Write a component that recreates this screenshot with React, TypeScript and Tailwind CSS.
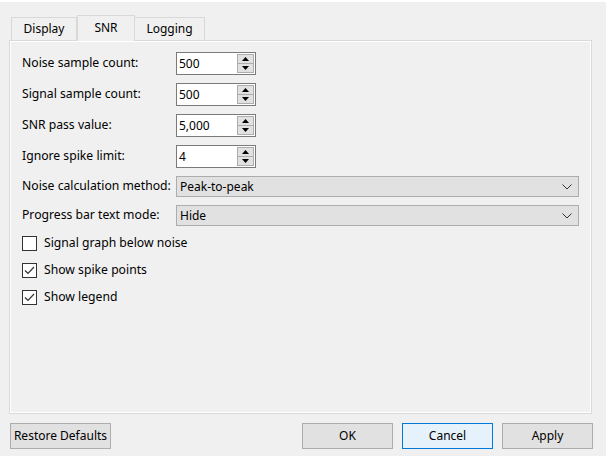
import React from "react";

const font = { fontFamily: '"Noto Sans", "Open Sans", sans-serif' };

function Spin({ value }: { value: string }) {
  return (
    <div className="flex h-[23px] w-[80px] border border-[#7a7a7a] bg-white">
      <div className="flex flex-1 items-center pl-[2px] text-[12px] text-black">{value}</div>
      <div className="my-[1px] mr-[1px] flex w-[17px] flex-col">
        <div className="flex flex-1 items-center justify-center border border-[#adadad] bg-[#e1e1e1]">
          <svg width="7" height="4" viewBox="0 0 7 4"><path d="M3.5 0 L7 4 L0 4 Z" fill="#000" /></svg>
        </div>
        <div className="flex flex-1 items-center justify-center border border-t-0 border-[#adadad] bg-[#e1e1e1]">
          <svg width="7" height="4" viewBox="0 0 7 4"><path d="M0 0 L7 0 L3.5 4 Z" fill="#000" /></svg>
        </div>
      </div>
    </div>
  );
}

function Combo({ value }: { value: string }) {
  return (
    <div className="flex h-[21px] w-[403px] items-center justify-between border border-[#adadad] bg-[#e1e1e1] pl-[3px] pr-[6px] text-[12px] text-black">
      <span>{value}</span>
      <svg width="10" height="6" viewBox="0 0 10 6">
        <path d="M0.5 0.5 L5 5 L9.5 0.5" fill="none" stroke="#333" strokeWidth="1" />
      </svg>
    </div>
  );
}

function Check({ label, checked }: { label: string; checked?: boolean }) {
  return (
    <div className="flex h-[15px] items-center gap-[7px]">
      <div className="flex h-[15px] w-[15px] items-center justify-center border border-[#333333] bg-white">
        {checked && (
          <svg width="11" height="9" viewBox="0 0 11 9">
            <path d="M1 4.5 L4 7.5 L10 1" fill="none" stroke="#333" strokeWidth="1.2" />
          </svg>
        )}
      </div>
      <span className="text-[12.2px] text-black">{label}</span>
    </div>
  );
}

function Btn({ label, focus, w = "w-[91px]" }: { label: string; focus?: boolean; w?: string }) {
  return (
    <div
      className={`flex h-[26px] ${w} items-center justify-center border text-[12px] text-black ${
        focus ? "border-[#0078d7] bg-[#e5f1fb]" : "border-[#adadad] bg-[#e1e1e1]"
      }`}
    >
      {label}
    </div>
  );
}

export default function App() {
  const rows: [string, string][] = [
    ["Noise sample count:", "500"],
    ["Signal sample count:", "500"],
    ["SNR pass value:", "5,000"],
    ["Ignore spike limit:", "4"],
  ];
  return (
    <div className="h-[459px] w-[610px] bg-white pt-[2px]" style={font}>
      <div className="flex h-[454px] w-[606px] flex-col bg-[#f0f0f0] pl-[9px]">
        <div className="mt-[13px] flex h-[25px] items-end pl-[2px] text-[12px] text-black">
          <div className="flex h-[23px] w-[66px] items-center justify-center border border-b-0 border-[#d9d9d9] bg-[#f0f0f0]">
            Display
          </div>
          <div className="relative z-10 -mb-[1px] flex h-[26px] w-[58px] items-center justify-center border border-b-0 border-[#d9d9d9] bg-[#f0f0f0] pb-[1px]">
            SNR
          </div>
          <div className="flex h-[23px] w-[70px] items-center justify-center border border-b-0 border-l-0 border-[#d9d9d9] bg-[#f0f0f0]">
            Logging
          </div>
        </div>
        <div className="flex h-[374px] w-[583px] flex-col border border-[#d9d9d9] bg-[#f0f0f0] pl-[12px] pt-[11px] shadow-[inset_0_0_0_1px_#ffffff]">
          <div className="flex flex-col gap-[8px]">
            {rows.map(([l, v]) => (
              <div key={l} className="flex items-center">
                <div className="w-[154px] text-[12.2px] text-black">{l}</div>
                <Spin value={v} />
              </div>
            ))}
            <div className="flex items-center">
              <div className="w-[154px] text-[12.2px] text-black">Noise calculation method:</div>
              <Combo value="Peak-to-peak" />
            </div>
            <div className="flex items-center">
              <div className="w-[154px] text-[12.2px] text-black">Progress bar text mode:</div>
              <Combo value="Hide" />
            </div>
          </div>
          <div className="mt-[10px] flex flex-col gap-[12px]">
            <Check label="Signal graph below noise" />
            <Check label="Show spike points" checked />
            <Check label="Show legend" checked />
          </div>
        </div>
        <div className="mt-[9px] flex items-center pr-[13px]">
          <div className="ml-[1px]">
            <Btn label="Restore Defaults" w="w-[101px]" />
          </div>
          <div className="ml-auto flex gap-[9px]">
            <Btn label="OK" />
            <Btn label="Cancel" focus />
            <Btn label="Apply" />
          </div>
        </div>
      </div>
    </div>
  );
}
